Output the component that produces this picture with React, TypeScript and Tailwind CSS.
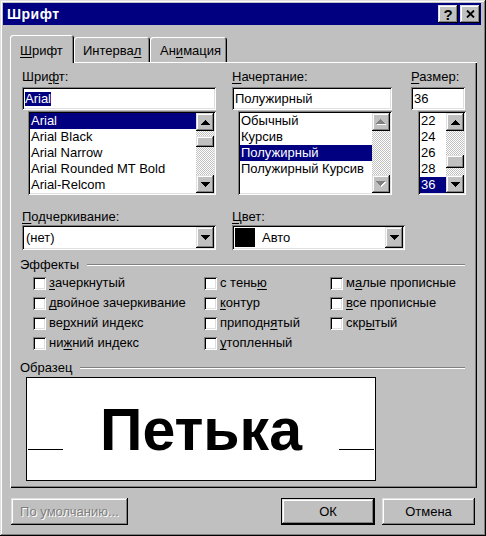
import type { ReactNode } from 'react';

const FONT = "font-['Liberation_Sans',Arial,sans-serif]";
const RAISED =
  'shadow-[inset_-1px_-1px_0_#000,inset_1px_1px_0_#dfdfdf,inset_-2px_-2px_0_#808080,inset_2px_2px_0_#fff]';
const SUNKEN =
  'shadow-[inset_1px_1px_0_#808080,inset_-1px_-1px_0_#fff,inset_2px_2px_0_#000,inset_-2px_-2px_0_#dfdfdf]';
const DITHER =
  'bg-[repeating-conic-gradient(#c0c0c0_0_25%,#fff_0_50%)] bg-[length:2px_2px]';

function U({ children }: { children: ReactNode }) {
  return <span className="underline decoration-1 underline-offset-[2px]">{children}</span>;
}

function Arrow({ dir, disabled }: { dir: 'up' | 'down'; disabled?: boolean }) {
  const up = '4.5,0 9,5 0,5';
  const down = '0,0 9,0 4.5,5';
  const pts = dir === 'up' ? up : down;
  if (disabled) {
    return (
      <svg width="10" height="6" viewBox="0 0 10 6" shapeRendering="crispEdges" aria-hidden="true">
        <polygon points={pts} fill="#fff" transform="translate(1 1)" />
        <polygon points={pts} fill="#808080" />
      </svg>
    );
  }
  return (
    <svg width="9" height="5" viewBox="0 0 9 5" shapeRendering="crispEdges" aria-hidden="true">
      <polygon points={pts} fill="#000" />
    </svg>
  );
}

function ScrollBar({ thumb, disabled }: { thumb?: string; disabled?: boolean }) {
  return (
    <div className="flex w-[18px] flex-col">
      <div className={`${RAISED} flex h-[18px] items-center justify-center bg-[#c0c0c0]`}>
        <Arrow dir="up" disabled={disabled} />
      </div>
      <div className={`${DITHER} flex-1`}>
        {thumb && <div className={`${RAISED} ${thumb} bg-[#c0c0c0]`} />}
      </div>
      <div className={`${RAISED} flex h-[18px] items-center justify-center bg-[#c0c0c0]`}>
        <Arrow dir="down" disabled={disabled} />
      </div>
    </div>
  );
}

function ListBox({
  items,
  selected,
  className,
  thumb,
  disabled,
}: {
  items: string[];
  selected: number;
  className: string;
  thumb?: string;
  disabled?: boolean;
}) {
  return (
    <div className={`${SUNKEN} ${className} flex h-[84px] bg-white p-[2px]`}>
      <div className="flex-1 overflow-hidden">
        {items.map((item, i) => (
          <div
            key={item}
            className={`h-[16px] whitespace-nowrap pl-[1px] leading-[16px] ${
              i === selected ? 'bg-[#000080] text-white' : ''
            }`}
          >
            {item}
          </div>
        ))}
      </div>
      <ScrollBar thumb={thumb} disabled={disabled} />
    </div>
  );
}

function TextInput({ children, className }: { children: ReactNode; className: string }) {
  return (
    <div className={`${SUNKEN} ${className} flex h-[23px] items-center bg-white pl-[3px]`}>
      {children}
    </div>
  );
}

function Combo({ children, className }: { children: ReactNode; className: string }) {
  return (
    <div className={`${SUNKEN} ${className} flex h-[25px] bg-white p-[2px]`}>
      <div className="flex flex-1 items-center">{children}</div>
      <div className={`${RAISED} flex w-[18px] items-center justify-center bg-[#c0c0c0]`}>
        <Arrow dir="down" />
      </div>
    </div>
  );
}

function Check({ children }: { children: ReactNode }) {
  return (
    <div className="flex h-[20px] items-center gap-[3px]">
      <div className={`${SUNKEN} h-[13px] w-[13px] bg-white`} />
      <span className="whitespace-nowrap">{children}</span>
    </div>
  );
}

function GroupHeader({ children }: { children: ReactNode }) {
  return (
    <div className="ml-[10px] flex h-[16px] w-[445px] items-center gap-[8px]">
      <span className="leading-[16px]">{children}</span>
      <div className="h-[2px] flex-1 border-t border-b border-t-[#808080] border-b-white" />
    </div>
  );
}

function Tab({ children, active, className }: { children: ReactNode; active?: boolean; className: string }) {
  return (
    <div
      className={`${className} rounded-t-[3px] bg-[#c0c0c0] leading-[16px] shadow-[inset_1px_1px_0_#fff,inset_-1px_0_0_#000,inset_-2px_0_0_#808080] ${
        active ? 'relative z-10 -mb-px h-[28px] pt-[8px]' : 'h-[25px] pt-[6px]'
      }`}
    >
      {children}
    </div>
  );
}

export default function App() {
  return (
    <div
      className={`${FONT} h-[536px] w-[486px] bg-[#c0c0c0] p-[3px] text-[13px] text-black shadow-[inset_-1px_-1px_0_#000,inset_1px_1px_0_#dfdfdf,inset_-2px_-2px_0_#808080,inset_2px_2px_0_#fff]`}
    >
      {/* title bar */}
      <div className="mr-[2px] flex h-[22px] items-center bg-[#000080]">
        <span className="pl-[4px] text-[14px] font-bold tracking-[0.5px] text-white">Шрифт</span>
        <div className="ml-auto mr-[1px] flex gap-[2px]">
          <div className={`${RAISED} flex h-[18px] w-[20px] items-center justify-center bg-[#c0c0c0] text-[15px] leading-none font-bold`}>
            ?
          </div>
          <div className={`${RAISED} flex h-[18px] w-[20px] items-center justify-center bg-[#c0c0c0]`}>
            <svg width="9" height="8" viewBox="0 0 9 8" aria-hidden="true">
              <path d="M1 0.5 L8 7.5 M8 0.5 L1 7.5" stroke="#000" strokeWidth="1.8" />
            </svg>
          </div>
        </div>
      </div>

      {/* tabs */}
      <div className="ml-[7px] mt-[10px] flex h-[27px] items-end">
        <Tab active className="w-[64px] pl-[10px]">
          <U>Ш</U>рифт
        </Tab>
        <Tab className="w-[76px] pl-[9px]">
          Интерва<U>л</U>
        </Tab>
        <Tab className="w-[77px] pl-[10px]">
          Ан<U>и</U>мация
        </Tab>
      </div>

      {/* panel */}
      <div className="ml-[7px] h-[426px] w-[467px] shadow-[inset_1px_1px_0_#fff,inset_-1px_-1px_0_#000,inset_-2px_-2px_0_#808080]">
        <div className="ml-[12px] flex pt-[7px]">
          <div className="w-[194px]">
            <div className="mb-[2px] h-[16px] leading-[16px]">
              Шри<U>ф</U>т:
            </div>
            <TextInput className="w-[194px]">
              <span className="bg-[#000080] leading-[14px] text-white">Arial</span>
            </TextInput>
            <ListBox
              className="ml-[6px] mt-[1px] w-[188px]"
              items={['Arial', 'Arial Black', 'Arial Narrow', 'Arial Rounded MT Bold', 'Arial-Relcom']}
              selected={0}
              thumb="mt-[5px] h-[11px]"
            />
          </div>
          <div className="ml-[16px] w-[160px]">
            <div className="mb-[2px] h-[16px] leading-[16px]">
              <U>Н</U>ачертание:
            </div>
            <TextInput className="w-[160px]">Полужирный</TextInput>
            <ListBox
              className="ml-[6px] mt-[1px] w-[154px]"
              items={['Обычный', 'Курсив', 'Полужирный', 'Полужирный Курсив']}
              selected={2}
              disabled
            />
          </div>
          <div className="ml-[19px] w-[55px]">
            <div className="mb-[2px] h-[16px] leading-[16px]">
              <U>Р</U>азмер:
            </div>
            <TextInput className="w-[54px]">36</TextInput>
            <ListBox
              className="ml-[7px] mt-[1px] w-[48px]"
              items={['22', '24', '26', '28', '36']}
              selected={4}
              thumb="mt-[24px] h-[13px]"
            />
          </div>
        </div>

        <div className="ml-[12px] mt-[14px] flex">
          <div className="w-[194px]">
            <div className="h-[16px] leading-[16px]">
              <U>П</U>одчеркивание:
            </div>
            <Combo className="w-[194px]">
              <span className="pl-[2px]">(нет)</span>
            </Combo>
          </div>
          <div className="ml-[16px] w-[173px]">
            <div className="h-[16px] leading-[16px]">
              <U>Ц</U>вет:
            </div>
            <Combo className="w-[173px]">
              <div className="ml-[1px] h-[19px] w-[20px] bg-black" />
              <span className="ml-[7px]">Авто</span>
            </Combo>
          </div>
        </div>

        <div className="mt-[7px]">
          <GroupHeader>Эффекты</GroupHeader>
        </div>
        <div className="ml-[23px] grid grid-flow-col grid-cols-[171px_126px_1fr] grid-rows-[repeat(4,20px)]">
          <Check>
            <U>з</U>ачеркнутый
          </Check>
          <Check>
            <U>д</U>войное зачеркивание
          </Check>
          <Check>
            ве<U>р</U>хний индекс
          </Check>
          <Check>
            ни<U>ж</U>ний индекс
          </Check>
          <Check>
            с тень<U>ю</U>
          </Check>
          <Check>
            <U>к</U>онтур
          </Check>
          <Check>
            приподн<U>я</U>тый
          </Check>
          <Check>
            <U>у</U>топленный
          </Check>
          <Check>
            м<U>а</U>лые прописные
          </Check>
          <Check>
            <U>в</U>се прописные
          </Check>
          <Check>
            скр<U>ы</U>тый
          </Check>
        </div>

        <div className="mt-[7px]">
          <GroupHeader>Образец</GroupHeader>
        </div>
        <div className="ml-[16px] mt-[1px] flex h-[104px] w-[350px] items-baseline border border-black bg-white pt-[23px]">
          <div className="ml-[1px] h-px w-[35px] bg-black" />
          <div className="flex-1 text-center text-[59px] leading-none font-bold">Петька</div>
          <div className="mr-[1px] h-px w-[35px] bg-black" />
        </div>
      </div>

      {/* buttons */}
      <div className="mt-[10px] flex">
        <div
          className={`${RAISED} ml-[8px] flex h-[27px] w-[117px] items-center justify-center bg-[#c0c0c0] text-[#808080] [text-shadow:1px_1px_0_#fff]`}
        >
          По умолчанию...
        </div>
        <div className="ml-[153px] h-[27px] w-[94px] border border-black">
          <div className={`${RAISED} flex h-full w-full items-center justify-center bg-[#c0c0c0]`}>ОК</div>
        </div>
        <div className={`${RAISED} ml-[7px] flex h-[27px] w-[93px] items-center justify-center bg-[#c0c0c0]`}>
          Отмена
        </div>
      </div>
    </div>
  );
}
